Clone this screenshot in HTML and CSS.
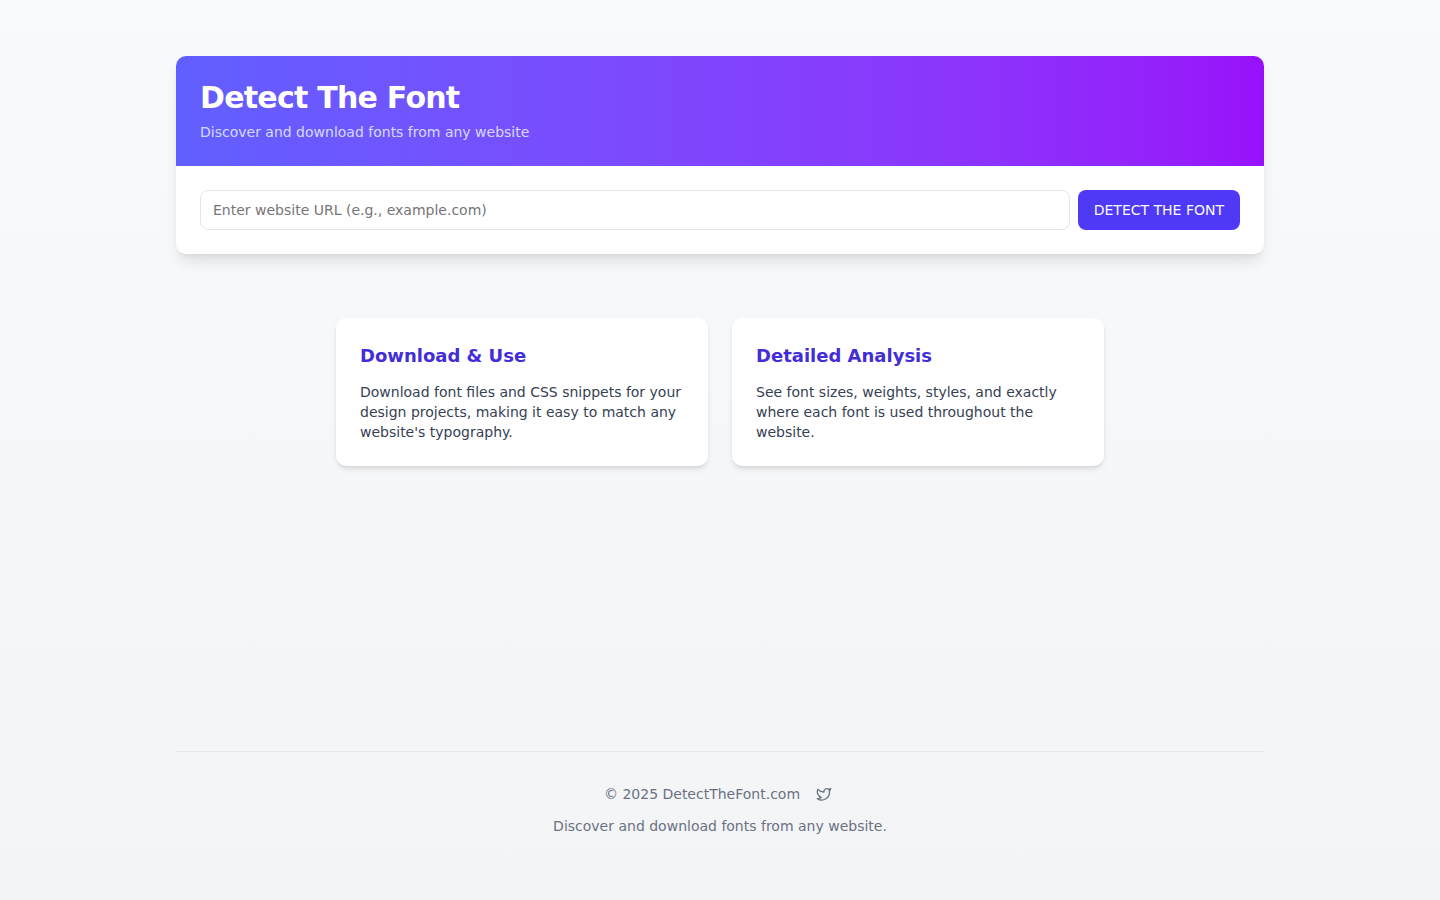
FILE: index.html
```
<!DOCTYPE html>
<html lang="en">

<head>
    <meta charset="UTF-8">
    <meta name="viewport" content="width=device-width, initial-scale=1.0">
    <title>Detect The Font</title>
    <link rel="stylesheet" href="styles.css">
</head>

<body>
    <div class="container">
        <main>
            <section class="card">
                <header class="card_header">
                    <h1>Detect The Font</h1>
                    <p>Discover and download fonts from any website</p>
                </header>
                <form class="search">
                    <input type="text" aria-label="Website URL" placeholder="Enter website URL (e.g., example.com)">
                    <button type="submit">DETECT THE FONT</button>
                </form>
            </section>

            <section class="features">
                <div class="feature">
                    <h2>Download &amp; Use</h2>
                    <p>Download font files and CSS snippets for your design projects, making it easy to match any website's typography.</p>
                </div>
                <div class="feature">
                    <h2>Detailed Analysis</h2>
                    <p>See font sizes, weights, styles, and exactly where each font is used throughout the website.</p>
                </div>
            </section>
        </main>

        <footer>
            <div class="footer_row">
                <span>© 2025 DetectTheFont.com</span>
                <a href="#" aria-label="Twitter">
                    <svg width="16" height="16" viewBox="0 0 24 24" fill="none" stroke="currentColor" stroke-width="2" stroke-linecap="round" stroke-linejoin="round">
                        <path d="M22 4s-.7 2.1-2 3.4c1.6 10-9.4 17.3-18 11.6 2.2.1 4.4-.6 6-2C3 15.5.5 9.6 3 5c2.2 2.6 5.6 4.1 9 4-.9-4.2 4-6.6 7-3.8 1.1 0 3-1.2 3-1.2z" />
                    </svg>
                </a>
            </div>
            <p>Discover and download fonts from any website.</p>
        </footer>
    </div>
</body>

</html>
```
FILE: styles.css
```
* {
    box-sizing: border-box;
    margin: 0;
    padding: 0;
}

body {
    min-height: 100vh;
    font-family: "DejaVu Sans", sans-serif;
    font-size: 14px;
    line-height: 20px;
    color: #364153;
    background-image: linear-gradient(to bottom in oklab, #f9fafb, #f3f4f6);
}

.container {
    display: flex;
    flex-direction: column;
    justify-content: space-between;
    min-height: 100vh;
    max-width: 1152px;
    margin: 0 auto;
    padding: 56px 32px 32px;
}

.card {
    overflow: hidden;
    border-radius: 10px;
    background-color: #fff;
    box-shadow: 0 10px 15px -3px rgba(0, 0, 0, 0.1), 0 4px 6px -4px rgba(0, 0, 0, 0.1);
}

.card_header {
    padding: 24px;
    color: #fff;
    background-image: linear-gradient(to right in oklab, #615fff, #9810fa);
}

.card_header h1 {
    margin-bottom: 6px;
    font-size: 30px;
    line-height: 36px;
    letter-spacing: -0.025em;
}

.card_header p {
    color: #e0e7ff;
    opacity: 0.9;
}

.search {
    display: flex;
    gap: 8px;
    padding: 24px;
}

.search input,
.search button {
    height: 40px;
    border-radius: 8px;
    font: inherit;
}

.search input {
    flex: 1;
    min-width: 0;
    padding: 0 12px;
    border: 1px solid #e5e5e5;
}

.search button {
    padding: 0 16px;
    border: none;
    color: #fafafa;
    background-color: #4f39f6;
    cursor: pointer;
}

.features {
    display: grid;
    grid-template-columns: 1fr 1fr;
    gap: 24px;
    max-width: 768px;
    margin: 64px auto 0;
}

.feature {
    padding: 24px;
    border-radius: 10px;
    background-color: #fff;
    box-shadow: 0 4px 6px -1px rgba(0, 0, 0, 0.1), 0 2px 4px -2px rgba(0, 0, 0, 0.1);
}

.feature h2 {
    margin-bottom: 12px;
    font-size: 18px;
    line-height: 28px;
    color: #432dd7;
}

footer {
    margin-top: 64px;
    padding: 32px 0;
    border-top: 1px solid #e5e7eb;
    text-align: center;
    color: #6a7282;
}

.footer_row {
    display: flex;
    align-items: center;
    justify-content: center;
    gap: 16px;
    margin-bottom: 12px;
}

.footer_row a {
    padding-right: 4px;
    color: inherit;
}

.footer_row svg {
    display: block;
}
```
